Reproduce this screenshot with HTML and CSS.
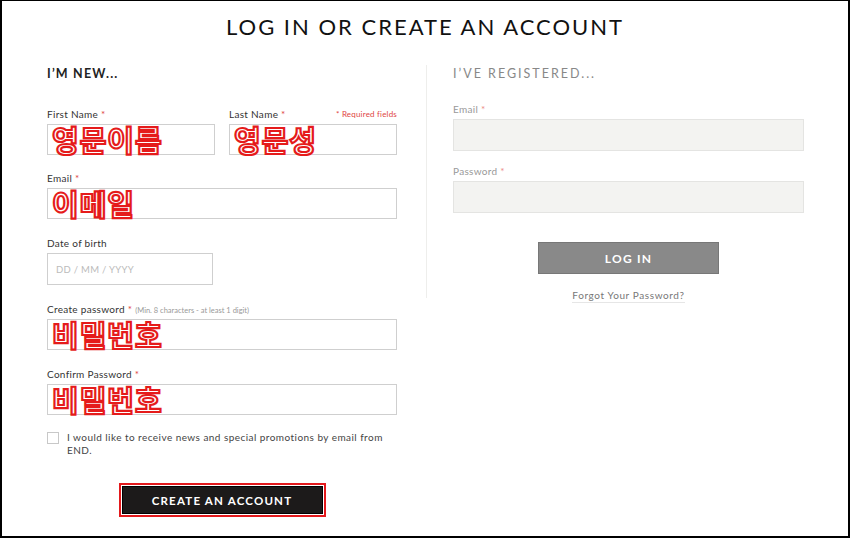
FILE: index.html
```html
<!DOCTYPE html>
<html lang="en">
<head>
<meta charset="utf-8">
<title>Log in or create an account</title>
<link rel="stylesheet" href="styles.css">
</head>
<body>
<div class="frame">
  <h1 class="title">LOG IN OR CREATE AN ACCOUNT</h1>
  <div class="columns">
    <section class="col col-new">
      <h2 class="col-heading">I’M NEW...</h2>
      <div class="row">
        <div class="field half">
          <div class="label">First Name <span class="req">*</span></div>
          <div class="input"><span class="ko">영문이름</span></div>
        </div>
        <div class="field half">
          <div class="label label-split"><span>Last Name <span class="req">*</span></span><span class="req-note">* Required fields</span></div>
          <div class="input"><span class="ko">영문성</span></div>
        </div>
      </div>
      <div class="field">
        <div class="label">Email <span class="req">*</span></div>
        <div class="input"><span class="ko">이메일</span></div>
      </div>
      <div class="field">
        <div class="label">Date of birth</div>
        <div class="input input-dob"><span class="placeholder">DD / MM / YYYY</span></div>
      </div>
      <div class="field">
        <div class="label">Create password <span class="req">*</span> <span class="hint">(Min. 8 characters - at least 1 digit)</span></div>
        <div class="input"><span class="ko">비밀번호</span></div>
      </div>
      <div class="field">
        <div class="label">Confirm Password <span class="req">*</span></div>
        <div class="input"><span class="ko">비밀번호</span></div>
      </div>
      <label class="check">
        <span class="box"></span>
        <span class="check-text">I would like to receive news and special promotions by email from END.</span>
      </label>
      <div class="btn-wrap">
        <div class="highlight"><button class="btn btn-dark">CREATE AN ACCOUNT</button></div>
      </div>
    </section>
    <div class="divider"></div>
    <section class="col col-reg">
      <h2 class="col-heading muted">I’VE REGISTERED...</h2>
      <div class="field reg">
        <div class="label muted">Email <span class="req light">*</span></div>
        <div class="input filled"></div>
      </div>
      <div class="field reg">
        <div class="label muted">Password <span class="req light">*</span></div>
        <div class="input filled"></div>
      </div>
      <div class="btn-wrap login-wrap">
        <button class="btn btn-grey">LOG IN</button>
      </div>
      <div class="forgot-wrap"><a class="forgot" href="#">Forgot Your Password?</a></div>
    </section>
  </div>
</div>
</body>
</html>
```

FILE: styles.css
```css
html, body {
  margin: 0;
  padding: 0;
  background: #fff;
}
body {
  font-family: "Lato", "Liberation Sans", sans-serif;
  color: #333;
}
.frame {
  width: 850px;
  height: 538px;
  box-sizing: border-box;
  border: 2px solid #000;
  border-top-width: 1px;
  overflow: hidden;
}
.title {
  margin: 13px 0 0;
  text-align: center;
  font-size: 22px;
  line-height: 26px;
  font-weight: 400;
  letter-spacing: 2px;
  color: #111;
}
.columns {
  display: flex;
  margin-top: 25px;
  padding-left: 45px;
}
.col-new {
  width: 350px;
}
.divider {
  width: 1px;
  height: 233px;
  background: #eeeeec;
  margin-left: 29px;
}
.col-reg {
  width: 351px;
  margin-left: 26px;
}
.col-heading {
  margin: 2px 0 0;
  font-size: 12.5px;
  line-height: 14px;
  font-weight: 700;
  letter-spacing: 1.2px;
  color: #222;
}
.col-heading.muted {
  color: #888;
  font-weight: 400;
  letter-spacing: 2px;
}
.row {
  display: flex;
  justify-content: space-between;
  margin-top: 27px;
}
.field {
  margin-bottom: 18px;
}
.field.half {
  width: 168px;
  margin-bottom: 0;
}
.row + .field {
  margin-top: 17px;
}
.label {
  font-size: 10px;
  line-height: 12px;
  height: 12px;
  letter-spacing: 0.3px;
  color: #333;
  margin-bottom: 4px;
  white-space: nowrap;
}
.label-split {
  display: flex;
  justify-content: space-between;
}
.req {
  color: #e0453f;
}
.req.light {
  color: #ec8a85;
}
.req-note {
  color: #e0453f;
  font-size: 8px;
  letter-spacing: 0.2px;
}
.hint {
  color: #999;
  font-size: 7.5px;
  letter-spacing: 0;
}
.label.muted {
  color: #999;
}
.input {
  box-sizing: border-box;
  height: 31px;
  border: 1px solid #cfcfcf;
  background: #fff;
  display: flex;
  align-items: center;
  padding-left: 4px;
}
.input-dob {
  width: 166px;
  height: 32px;
  padding-left: 8px;
}
.placeholder {
  font-size: 9.5px;
  color: #bbb;
  letter-spacing: 0.3px;
}
.ko {
  font-family: "Noto Sans CJK KR", sans-serif;
  font-weight: 700;
  font-size: 29px;
  line-height: 29px;
  height: 29px;
  color: #fff;
  -webkit-text-stroke: 2.2px #e51b1b;
  letter-spacing: 1px;
}
.check {
  display: flex;
  align-items: flex-start;
  margin-top: -2px;
}
.box {
  flex: none;
  width: 10px;
  height: 10px;
  border: 1px solid #c8c8c8;
  margin-top: 1px;
}
.check-text {
  margin-left: 8px;
  font-size: 10px;
  line-height: 13px;
  color: #444;
  letter-spacing: 0.45px;
  width: 318px;
}
.btn-wrap {
  display: flex;
  justify-content: center;
}
.col-new .btn-wrap {
  margin-top: 26px;
}
.highlight {
  border: 2px solid #e3191c;
  padding: 1px;
}
.btn {
  font-family: "Lato", "Liberation Sans", sans-serif;
  font-weight: 700;
  color: #fff;
  border: 1px solid #000;
  cursor: pointer;
}
.btn-dark {
  width: 201px;
  height: 28px;
  background: #1c1a1a;
  font-size: 11.5px;
  letter-spacing: 1.2px;
}
.field.reg {
  margin-bottom: 0;
}
.col-reg .field.reg:first-of-type {
  margin-top: 22px;
}
.field.reg + .field.reg {
  margin-top: 14px;
}
.input.filled {
  height: 32px;
  background: #f3f3f1;
  border-color: #e4e4e2;
}
.login-wrap {
  margin-top: 29px;
}
.btn-grey {
  width: 181px;
  height: 32px;
  background: #898989;
  border-color: #777;
  font-size: 12px;
  letter-spacing: 1.2px;
}
.forgot-wrap {
  text-align: center;
  margin-top: 13px;
  line-height: 12px;
  height: 14px;
}
.forgot {
  font-size: 10px;
  line-height: 12px;
  letter-spacing: 0.6px;
  color: #777;
  text-decoration: none;
  border-bottom: 1px solid #e6e6e6;
  padding-bottom: 1px;
}
```
